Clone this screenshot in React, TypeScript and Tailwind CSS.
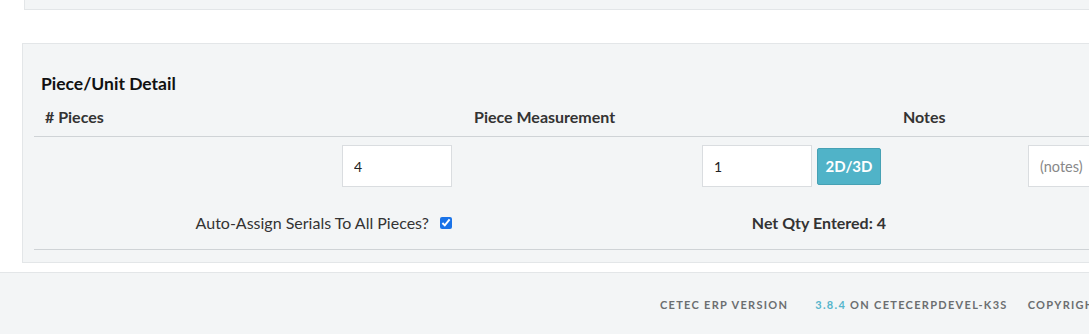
export default function App() {
  return (
    <div className="w-[1089px] h-[334px] overflow-hidden bg-white font-['Lato','Liberation_Sans',sans-serif] text-[#333]">
      {/* previous panel tail */}
      <div className="ml-[24px] w-[1300px] h-[10px] bg-[#f3f5f6] border-l border-b border-[#e3e6e8]" />

      {/* Piece/Unit Detail panel */}
      <div className="mt-[33px] ml-[22px] w-[1320px] h-[220px] bg-[#f3f5f6] border border-[#e3e6e8] pl-[11px]">
        <h3 className="mt-[28px] ml-[7px] text-[17.5px] font-bold leading-[24px] text-[#111]">Piece/Unit Detail</h3>

        <div className="mt-[11px] grid grid-cols-[430px_429px_429px] border-b border-[#cfd3d6] text-[16px] font-bold leading-[20px] pb-[9px]">
          <div className="pl-[11px]"># Pieces</div>
          <div className="pl-[10px]">Piece Measurement</div>
          <div className="pl-[10px]">Notes</div>
        </div>

        <div className="grid grid-cols-[430px_429px_429px] pt-[8px]">
          <div className="flex justify-end pr-[12px]">
            <input
              defaultValue="4"
              className="w-[110px] h-[42px] bg-white border border-[#dadde0] px-[11px] text-[14px] text-[#222] outline-none"
            />
          </div>
          <div className="flex justify-end items-center gap-[5px] pr-[12px]">
            <input
              defaultValue="1"
              className="w-[110px] h-[42px] bg-white border border-[#dadde0] px-[11px] text-[14px] text-[#222] outline-none"
            />
            <button className="w-[64px] h-[37px] bg-[#50b3c8] border border-[#46a1b4] rounded-[2px] text-white text-[15px] font-bold">
              2D/3D
            </button>
          </div>
          <div className="pl-[135px]">
            <input
              placeholder="(notes)"
              className="w-[282px] h-[42px] bg-white border border-[#dadde0] px-[11px] text-[14.5px] text-[#222] placeholder:text-[#888] outline-none"
            />
          </div>
        </div>

        <div className="grid grid-cols-[430px_429px_429px] h-[63px] pt-[9px] items-center border-b border-[#cfd3d6]">
          <div className="flex justify-end items-center gap-[11px] pr-[12px] text-[16px] text-[#333]">
            <span>Auto-Assign Serials To All Pieces?</span>
            <input type="checkbox" defaultChecked className="w-[12px] h-[12px] accent-[#1a73e8]" />
          </div>
          <div className="text-right pr-[7px] text-[16px] font-bold">Net Qty Entered: 4</div>
          <div />
        </div>
      </div>

      {/* footer */}
      <div className="mt-[9px] w-full h-[63px] pt-[3px] bg-[#f3f5f6] border-t border-[#e3e6e8] flex items-center pl-[660px] whitespace-nowrap text-[11px] font-bold tracking-[1.3px] uppercase text-[#6b6e70]">
        <span>Cetec ERP Version</span>
        <span className="ml-[27px]">
          <span className="text-[#56b5cc]">3.8.4</span> on cetecerpdevel-k3s
        </span>
        <span className="ml-[20px]">Copyright</span>
      </div>
    </div>
  );
}
